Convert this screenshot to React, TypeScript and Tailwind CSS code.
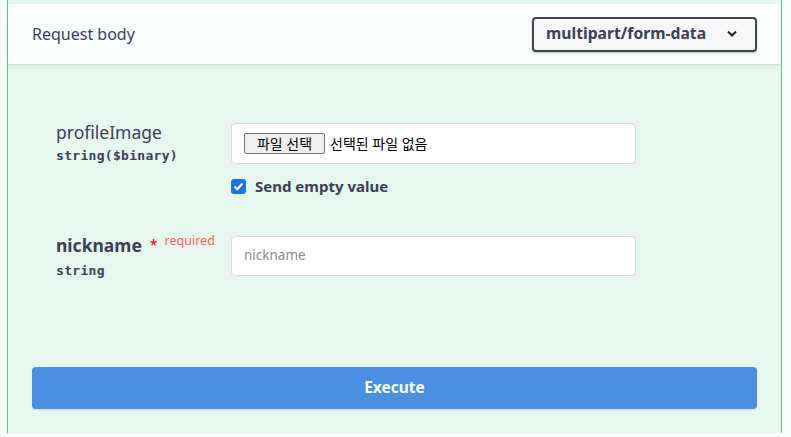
import React from 'react'

const sans = { fontFamily: '"Noto Sans", "Noto Sans CJK KR", sans-serif' }
const mono = { fontFamily: '"DejaVu Sans Mono", "Noto Sans CJK KR", monospace' }

const App: React.FC = () => {
  return (
    <div className="w-[791px] h-[437px] bg-[#f9fafa] overflow-hidden text-[#3b4151]" style={sans}>
      <div className="ml-[7px] w-[775px] h-[433px] border-x border-[#49cc90] bg-[#e7f6ef] pt-[4px] flex flex-col">
        {/* section header */}
        <div className="h-[60px] bg-[#fafdfc] shadow-[0_1px_2px_rgba(0,0,0,0.12)] flex items-center justify-between pl-[24px] pr-[24px]">
          <h4 className="text-[16px] font-normal">Request body</h4>
          <div className="w-[225px] h-[35px] border-2 border-[#41444e] rounded-[4px] bg-[#f7f7f7] shadow-[0_1px_2px_rgba(0,0,0,0.25)] flex items-center justify-between pl-[12px] pr-[17px]">
            <span className="text-[15.7px] font-bold">multipart/form-data</span>
            <svg width="12" height="8" viewBox="0 0 12 8" fill="none">
              <path d="M2 1.5 L6 5.5 L10 1.5" stroke="#1f2229" strokeWidth="2" />
            </svg>
          </div>
        </div>

        {/* parameters */}
        <div className="pl-[48px] pt-[58px] flex flex-col">
          <div className="flex">
            <div className="w-[175px]">
              <div className="text-[17.5px] leading-[20px]">profileImage</div>
              <div className="text-[13px] font-semibold tracking-[0.3px] mt-[4px]" style={mono}>string($binary)</div>
            </div>
            <div className="flex flex-col mt-[1px]">
              <div className="w-[405px] h-[41px] bg-white border border-[#d9d9d9] rounded-[4px] flex items-center pl-[12px]">
                <span className="h-[21px] w-[81px] flex items-center justify-center border border-[#767676] rounded-[2px] bg-[#efefef] text-[14px] text-black">파일 선택</span>
                <span className="ml-[5px] text-[14px] text-black">선택된 파일 없음</span>
              </div>
              <label className="flex items-center mt-[11px]">
                <span className="w-[15px] h-[15px] rounded-[3px] bg-[#1a73e8] flex items-center justify-center">
                  <svg width="11" height="9" viewBox="0 0 11 9" fill="none">
                    <path d="M1.5 4.5 L4.2 7.2 L9.5 1.5" stroke="white" strokeWidth="2" />
                  </svg>
                </span>
                <span className="ml-[9px] text-[15px] font-bold">Send empty value</span>
              </label>
            </div>
          </div>

          <div className="flex mt-[38px]">
            <div className="w-[175px]">
              <div className="flex items-start">
                <span className="text-[17.5px] font-bold leading-[22px] mt-[-2px]">nickname</span>
                <span className="text-[#ff0000] text-[14px] ml-[8px] leading-[14px] mt-[2px]">*</span>
                <span className="text-[#f96060] text-[12.5px] ml-[7px] leading-[12px] mt-[-1px]">required</span>
              </div>
              <div className="text-[13px] font-semibold tracking-[0.3px] mt-[5px]" style={mono}>string</div>
            </div>
            <div className="w-[405px] h-[40px] bg-white border border-[#d9d9d9] rounded-[4px] flex items-center pl-[12px]">
              <span className="text-[13.5px] text-[#8a8d94]">nickname</span>
            </div>
          </div>
        </div>

        {/* execute */}
        <div className="px-[24px] mt-[87px]">
          <button className="w-full h-[42px] bg-[#4990e2] rounded-[4px] shadow-[0_1px_2px_rgba(0,0,0,0.1)] text-white text-[15.5px] font-bold">
            Execute
          </button>
        </div>
      </div>
    </div>
  )
}

export default App
